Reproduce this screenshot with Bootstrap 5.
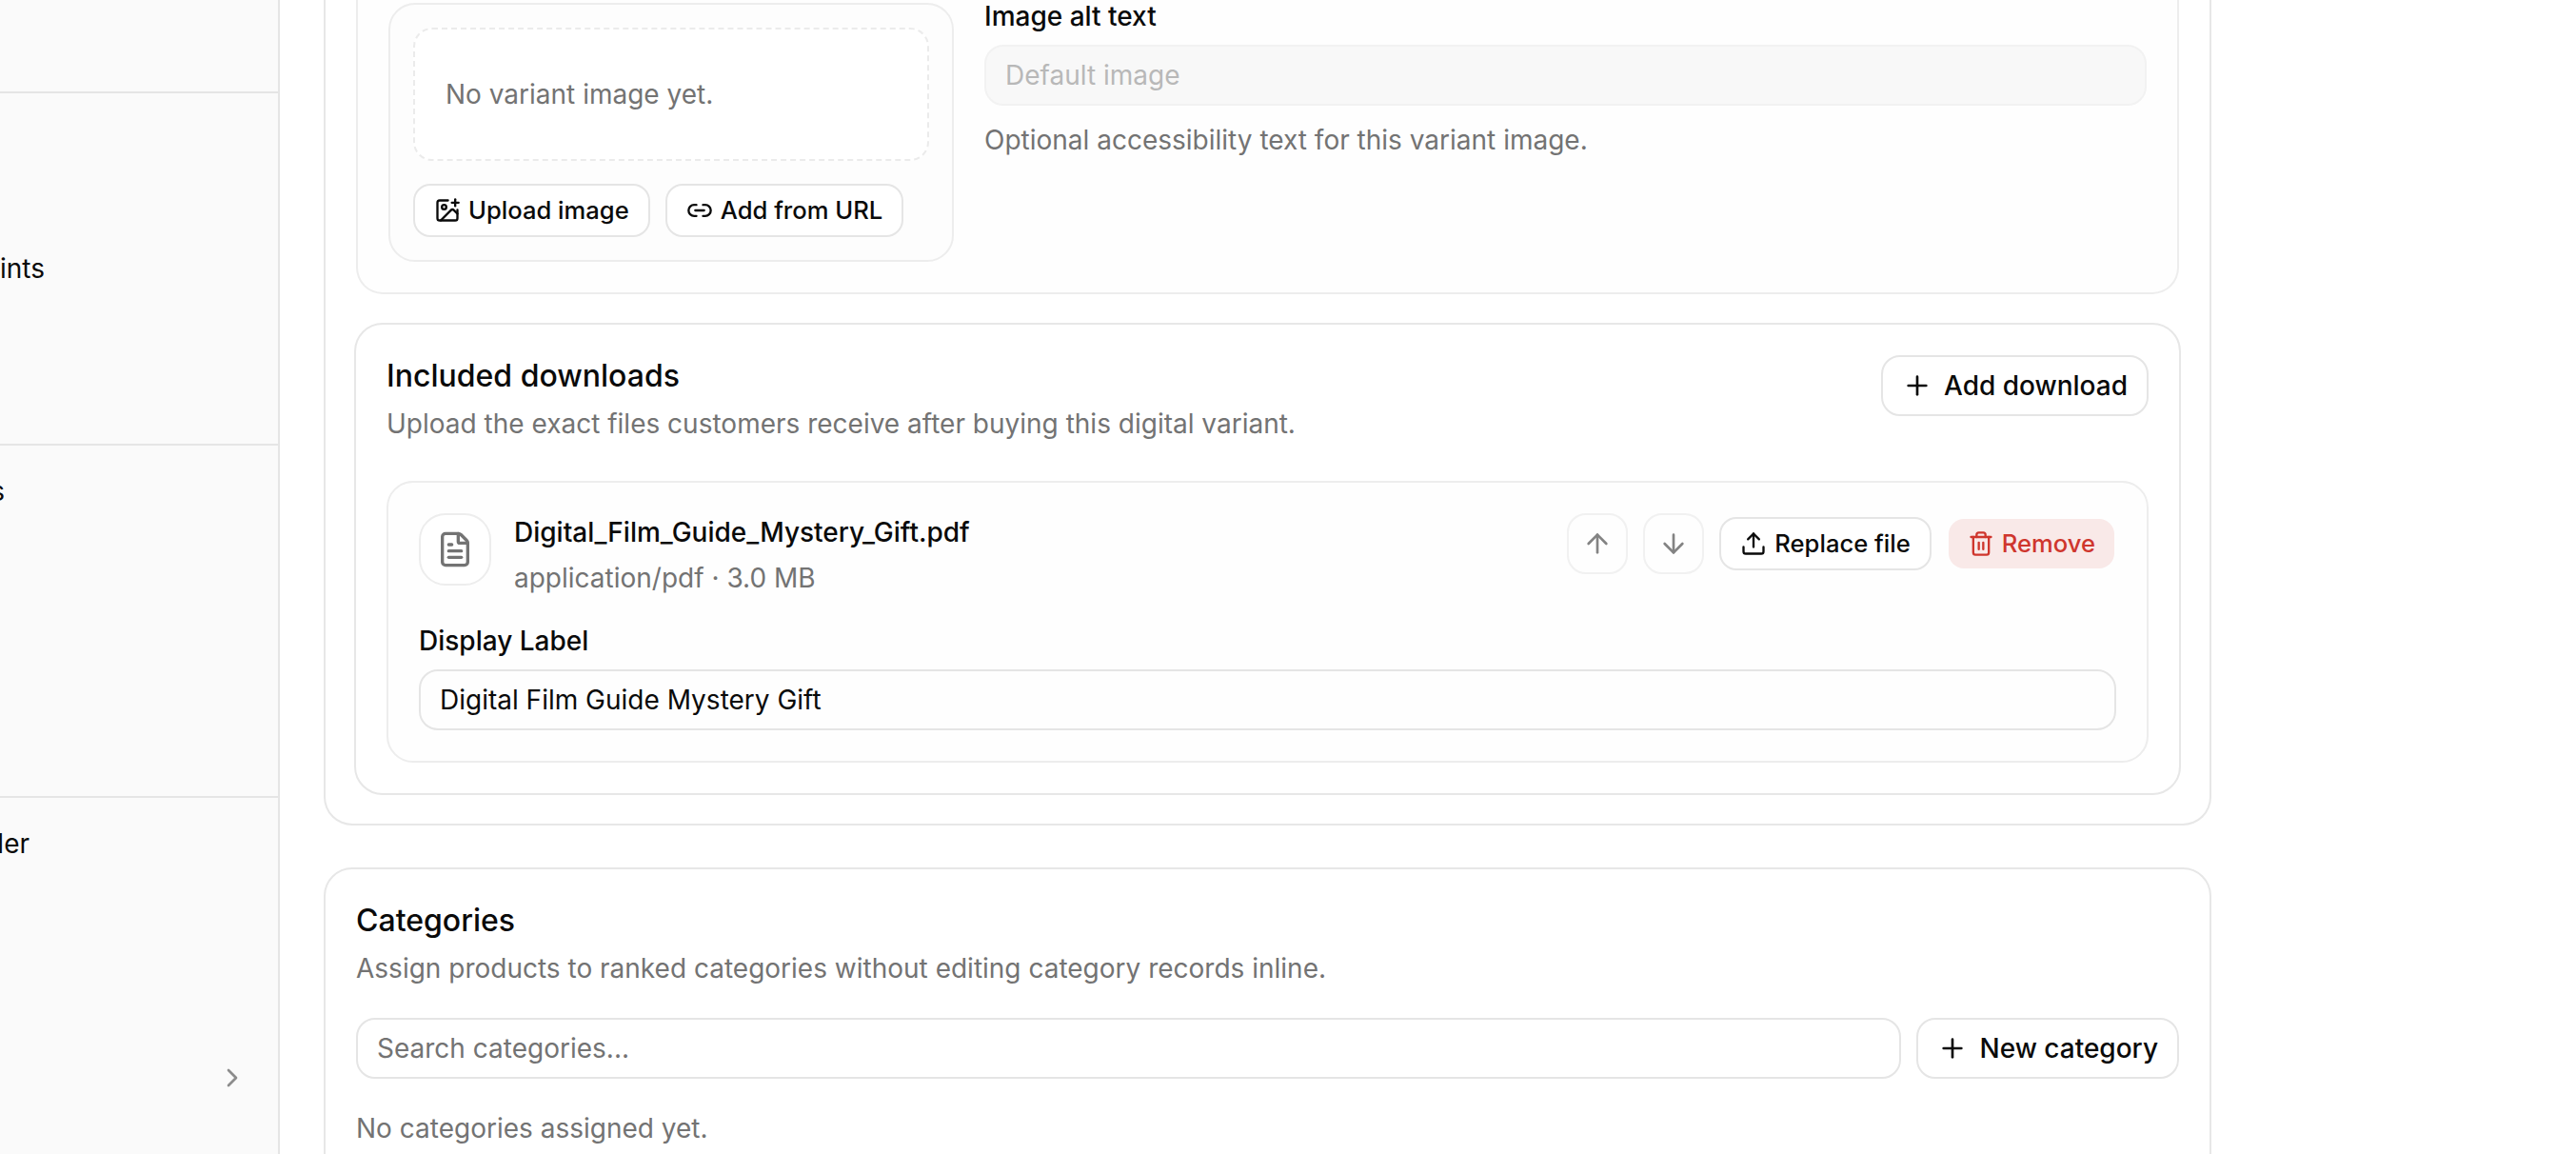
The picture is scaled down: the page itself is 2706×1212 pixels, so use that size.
<!DOCTYPE html>
<html lang="en">

<head>
  <meta charset="utf-8">
  <meta name="viewport" content="width=device-width">
  <title>Edit product</title>
  <link href="https://cdn.jsdelivr.net/npm/bootstrap@5.3.3/dist/css/bootstrap.min.css" rel="stylesheet" type="text/css" />
  <style>
    body {
      font-family: Inter, "Liberation Sans", sans-serif;
      font-size: 28px;
      line-height: 40px;
      color: #0a0a0a;
      background: #fff;
      overflow: hidden;
    }
    .page { height: 1212px; }

    /* sidebar */
    .sidebar { width: 294px; background: #fafafa; border-right: 2px solid #e5e5e5; }
    .side-block { height: 370px; border-bottom: 2px solid #e5e5e5; }
    .side-block.first { height: 98px; }
    .side-block.last { height: 374px; border-bottom: 0; }
    .side-text { display: flex; justify-content: flex-end; white-space: nowrap; }
    .w-ints { width: 47px; padding-top: 164px; }
    .w-s { width: 5px; padding-top: 28px; }
    .w-ler { width: 31px; padding-top: 28px; }
    .side-chevron { padding-right: 32px; margin-top: 210px; color: #8c8c8c; }

    /* panels */
    .main-col { width: 1983px; margin-left: 46px; }
    .panel { border: 2px solid #e7e7e7; border-radius: 30px; padding: 32px; }
    .panel-cut { height: 867px; padding-top: 0; border-top: 0; border-top-left-radius: 0; border-top-right-radius: 0; }
    .panel-categories { margin-top: 44px; height: 420px; }
    .variant-box { height: 309px; border: 2px solid #ededed; border-top: 0; border-radius: 0 0 28px 28px; padding: 3px 32px 32px; background: #fefefe; }
    .image-box { width: 594px; height: 272px; border: 2px solid #ededed; border-radius: 28px; padding: 24px; background: #fdfdfd; }
    .image-empty { height: 140px; border: 2px dashed #ebebeb; border-radius: 20px; padding: 0 32px; background: #fff; color: #737373; }
    .downloads-box { margin: 30px -2px 0; border: 2px solid #e7e7e7; border-radius: 30px; padding: 32px; background: #fff; }
    .file-box { margin-top: 40px; border: 2px solid #ededed; border-radius: 28px; padding: 32px; background: #fefefe; }
    .file-icon { width: 76px; height: 76px; border: 2px solid #ededed; border-radius: 28px; background: #fff; color: #737373; }

    .panel-title { font-size: 32px; line-height: 44px; font-weight: 500; margin: 0; }
    .hint { color: #737373; margin: 8px 0 0; }
    .field-label { display: block; line-height: 28px; font-weight: 500; margin-bottom: 16px; }
    .file-name { font-weight: 500; }

    .form-control {
      height: 64px; border: 2px solid #e5e5e5; border-radius: 20px; padding: 0 20px;
      font-size: 28px; line-height: 40px; color: #0a0a0a; background: transparent;
    }
    .form-control::placeholder { color: #737373; opacity: 1; }
    .form-control:disabled { background: #f8f8f8; border-color: #f2f2f2; }
    .form-control:disabled::placeholder { color: #b8b8b8; }

    .btn {
      --bs-btn-color: #0a0a0a;
      --bs-btn-border-color: #e5e5e5;
      --bs-btn-bg: #fff;
      display: inline-flex; align-items: center; white-space: nowrap;
      height: 64px; border-width: 2px; border-radius: 20px; padding: 0 20px; gap: 12px;
      font-size: 28px; line-height: 40px; font-weight: 500;
    }
    .btn-small { height: 56px; border-radius: 18px; font-size: 25.6px; gap: 8px; }
    .btn-square { width: 64px; padding: 0; justify-content: center; opacity: .5; }
    .btn-remove { --bs-btn-color: #cf362d; --bs-btn-border-color: transparent; --bs-btn-bg: #f9e9e8; background-clip: padding-box; }

    svg { fill: none; stroke: currentColor; stroke-width: 2; stroke-linecap: round; stroke-linejoin: round; flex-shrink: 0; }
    .i28 { width: 28px; height: 28px; }
    .i32 { width: 32px; height: 32px; }
    .i40 { width: 40px; height: 40px; }
  </style>
</head>

<body>
  <div class="page d-flex overflow-hidden">

    <aside class="sidebar flex-shrink-0 overflow-hidden">
      <div class="side-block first"></div>
      <div class="side-block">
        <div class="side-text w-ints">ints</div>
      </div>
      <div class="side-block">
        <div class="side-text w-s">s</div>
      </div>
      <div class="side-block last">
        <div class="side-text w-ler">ler</div>
        <div class="side-chevron d-flex justify-content-end">
          <svg class="i32" viewBox="0 0 24 24"><path d="m9 18 6-6-6-6" /></svg>
        </div>
      </div>
    </aside>

    <main class="main-col flex-shrink-0">
      <section class="panel panel-cut">
        <div class="variant-box d-flex">
          <div class="image-box flex-shrink-0">
            <div class="image-empty d-flex align-items-center">No variant image yet.</div>
            <div class="d-flex gap-3 mt-4">
              <button type="button" class="btn btn-small">
                <svg class="i28" viewBox="0 0 24 24"><path d="M16 5h6" /><path d="M19 2v6" /><path d="M21 11.5V19a2 2 0 0 1-2 2H5a2 2 0 0 1-2-2V5a2 2 0 0 1 2-2h7.5" /><path d="m21 15-3.086-3.086a2 2 0 0 0-2.828 0L6 21" /><circle cx="9" cy="9" r="2" /></svg>
                Upload image
              </button>
              <button type="button" class="btn btn-small">
                <svg class="i28" viewBox="0 0 24 24"><path d="M9 17H7A5 5 0 0 1 7 7h2" /><path d="M15 7h2a5 5 0 1 1 0 10h-2" /><path d="M8 12h8" /></svg>
                Add from URL
              </button>
            </div>
          </div>
          <div class="flex-grow-1 ms-4 ps-2">
            <label class="field-label" for="altText">Image alt text</label>
            <input id="altText" class="form-control" type="text" placeholder="Default image" disabled>
            <p class="hint mt-3">Optional accessibility text for this variant image.</p>
          </div>
        </div>

        <div class="downloads-box">
          <div class="d-flex justify-content-between align-items-start">
            <div>
              <h2 class="panel-title">Included downloads</h2>
              <p class="hint">Upload the exact files customers receive after buying this digital variant.</p>
            </div>
            <button type="button" class="btn">
              <svg class="i32" viewBox="0 0 24 24"><path d="M5 12h14" /><path d="M12 5v14" /></svg>
              Add download
            </button>
          </div>

          <div class="file-box">
            <div class="d-flex justify-content-between align-items-start">
              <div class="d-flex gap-4">
                <div class="file-icon d-flex align-items-center justify-content-center">
                  <svg class="i40" viewBox="0 0 24 24"><path d="M6 22a2 2 0 0 1-2-2V4a2 2 0 0 1 2-2h8a2.4 2.4 0 0 1 1.704.706l3.588 3.588A2.4 2.4 0 0 1 20 8v12a2 2 0 0 1-2 2z" /><path d="M14 2v5a1 1 0 0 0 1 1h5" /><path d="M10 9H8" /><path d="M16 13H8" /><path d="M16 17H8" /></svg>
                </div>
                <div>
                  <div class="file-name">Digital_Film_Guide_Mystery_Gift.pdf</div>
                  <div class="hint">application/pdf · 3.0 MB</div>
                </div>
              </div>
              <div class="d-flex align-items-center gap-3">
                <button type="button" class="btn btn-square" aria-label="Move up">
                  <svg class="i32" viewBox="0 0 24 24"><path d="m5 12 7-7 7 7" /><path d="M12 19V5" /></svg>
                </button>
                <button type="button" class="btn btn-square" aria-label="Move down">
                  <svg class="i32" viewBox="0 0 24 24"><path d="M12 5v14" /><path d="m19 12-7 7-7-7" /></svg>
                </button>
                <button type="button" class="btn btn-small">
                  <svg class="i28" viewBox="0 0 24 24"><path d="M12 3v12" /><path d="m17 8-5-5-5 5" /><path d="M21 15v4a2 2 0 0 1-2 2H5a2 2 0 0 1-2-2v-4" /></svg>
                  Replace file
                </button>
                <button type="button" class="btn btn-small btn-remove">
                  <svg class="i28" viewBox="0 0 24 24"><path d="M10 11v6" /><path d="M14 11v6" /><path d="M19 6v14a2 2 0 0 1-2 2H7a2 2 0 0 1-2-2V6" /><path d="M3 6h18" /><path d="M8 6V4a2 2 0 0 1 2-2h4a2 2 0 0 1 2 2v2" /></svg>
                  Remove
                </button>
              </div>
            </div>
            <label class="field-label mt-4 pt-2" for="displayLabel">Display Label</label>
            <input id="displayLabel" class="form-control" type="text" value="Digital Film Guide Mystery Gift">
          </div>
        </div>
      </section>

      <section class="panel panel-categories">
        <h2 class="panel-title">Categories</h2>
        <p class="hint">Assign products to ranked categories without editing category records inline.</p>
        <div class="d-flex gap-3 mt-4 pt-2">
          <input class="form-control" type="text" placeholder="Search categories..." aria-label="Search categories">
          <button type="button" class="btn flex-shrink-0">
            <svg class="i32" viewBox="0 0 24 24"><path d="M5 12h14" /><path d="M12 5v14" /></svg>
            New category
          </button>
        </div>
        <p class="hint mt-4 pt-2 mb-0">No categories assigned yet.</p>
      </section>
    </main>

  </div>
  <script src="https://cdn.jsdelivr.net/npm/bootstrap@5.3.3/dist/js/bootstrap.bundle.min.js"></script>
</body>

</html>
